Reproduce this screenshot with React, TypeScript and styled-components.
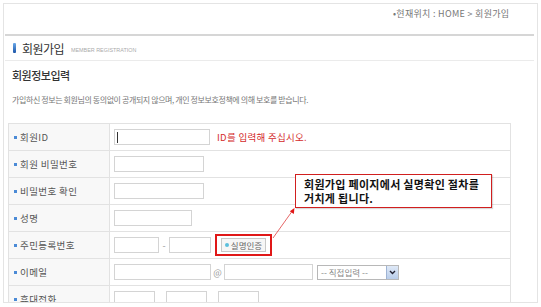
import React from "react";
import styled, { createGlobalStyle } from "styled-components";

const Global = createGlobalStyle`
  html, body { margin: 0; padding: 0; background: #fff; }
  body { font-family: "Noto Sans CJK KR", "Noto Sans", sans-serif; }
  * { box-sizing: border-box; }
`;

const Frame = styled.div`
  position: relative;
  margin: 3px 0 0 3px;
  width: 535px;
  height: 300px;
  border: 1px solid #e4e4e4;
  overflow: hidden;
  background: #fff;
`;

const Breadcrumb = styled.div`
  height: 30px;
  padding: 4px 0 0 389px;
  font-size: 9px;
  line-height: 12px;
  color: #777;
  letter-spacing: 0.3px;
  white-space: nowrap;
`;

const HeavyRule = styled.div`
  margin: 0 3px 0 1px;
  height: 2px;
  background: #d6d6d6;
`;

const LightRule = styled.div`
  margin: 0 3px 0 1px;
  height: 1px;
  background: #ebebeb;
`;

const TitleRow = styled.div`
  height: 24px;
  display: flex;
  align-items: center;
  padding-left: 9px;
  gap: 6px;
`;

const TitleBar = styled.span`
  width: 3px;
  height: 10px;
  border-radius: 1px;
  background: linear-gradient(#6aa8e8, #1c55a8);
`;

const Title = styled.span`
  font-size: 12px;
  color: #333;
  letter-spacing: -0.5px;
`;

const SubTitle = styled.span`
  font-family: "Liberation Sans", sans-serif;
  font-size: 6px;
  color: #aaa;
  margin-left: 1px;
  margin-top: 3px;
  transform: scaleX(0.9);
  transform-origin: left center;
`;

const SectionTitle = styled.div`
  padding: 8px 0 0 8px;
  font-size: 11px;
  line-height: 13px;
  color: #333;
  letter-spacing: -0.5px;
  font-weight: 500;
`;

const Description = styled.div`
  padding: 12px 0 0 8px;
  font-size: 8px;
  line-height: 11px;
  color: #777;
  letter-spacing: -0.4px;
  white-space: nowrap;
`;

const Table = styled.div`
  margin: 18px 0 0 4px;
  width: 503px;
  border-top: 1px solid #e2e2e2;
  border-left: 1px solid #e2e2e2;
  border-right: 1px solid #e2e2e2;
`;

const Row = styled.div`
  display: grid;
  grid-template-columns: 101px 1fr;
  height: 27px;
  border-bottom: 1px solid #e2e2e2;
`;

const Label = styled.div`
  background: #f8f8f8;
  border-right: 1px solid #e2e2e2;
  display: flex;
  align-items: center;
  padding-left: 5px;
  font-size: 9.5px;
  color: #555;
  letter-spacing: 0.4px;
  white-space: nowrap;
  &::before {
    content: "";
    width: 3px;
    height: 3px;
    background: #4a8ad6;
    margin-right: 3px;
  }
`;

const Cell = styled.div<{ $gap?: number }>`
  display: flex;
  align-items: center;
  padding-left: 4px;
  gap: ${(p) => p.$gap ?? 6}px;
`;

const Field = styled.div<{ $w: number }>`
  position: relative;
  width: ${(p) => p.$w}px;
  height: 16px;
  border: 1px solid #d4d4d4;
  background: #fff;
`;

const Caret = styled.span`
  position: absolute;
  left: 2px;
  top: 2px;
  width: 1px;
  height: 11px;
  background: #333;
`;

const Hint = styled.span`
  font-size: 9.5px;
  color: #d42b2b;
  letter-spacing: 0.3px;
  white-space: nowrap;
  margin-left: 1px;
`;

const Sep = styled.span<{ $w: number }>`
  font-size: 9px;
  color: #999;
  width: ${(p) => p.$w}px;
  text-align: center;
`;

const Highlight = styled.div`
  margin-left: 2px;
  width: 57px;
  height: 22px;
  border: 2px solid #e01818;
  display: flex;
  align-items: center;
  justify-content: center;
`;

const SmallButton = styled.div`
  height: 14px;
  padding: 0 3px;
  border: 1px solid #c8c8c8;
  background: #f6f6f6;
  display: flex;
  align-items: center;
  gap: 2px;
  font-size: 8.5px;
  color: #666;
  white-space: nowrap;
  &::before {
    content: "";
    width: 4px;
    height: 4px;
    border-radius: 50%;
    background: #5bbfdc;
  }
`;

const Select = styled.div`
  display: flex;
  align-items: center;
  width: 82px;
  height: 15px;
  border: 1px solid #b8b8b8;
  background: #fff;
  font-size: 8.5px;
  color: #888;
  padding-left: 3px;
  white-space: nowrap;
  margin-left: 4px;
`;

const SelectText = styled.span`
  flex: 1;
`;

const SelectArrow = styled.span`
  width: 12px;
  height: 13px;
  background: linear-gradient(#dfe9f7, #b9cdea);
  border-left: 1px solid #9fb4d4;
  display: flex;
  align-items: center;
  justify-content: center;
`;

const Callout = styled.div`
  position: absolute;
  left: 291px;
  top: 170px;
  width: 197px;
  height: 34px;
  border: 1.5px solid #d11f1f;
  background: #fff;
  padding: 2px 0 0 8px;
  font-size: 11px;
  line-height: 14px;
  font-weight: 700;
  color: #111;
  letter-spacing: 0.3px;
  white-space: nowrap;
  box-shadow: 1px 1px 1px rgba(0,0,0,0.15);
`;

const Arrow = styled.svg`
  position: absolute;
  left: 264px;
  top: 200px;
  overflow: visible;
`;

export default function App() {
  return (
    <>
      <Global />
      <Frame>
        <Breadcrumb>•현재위치 : HOME &gt; 회원가입</Breadcrumb>
        <HeavyRule />
        <TitleRow>
          <TitleBar />
          <Title>회원가입</Title>
          <SubTitle>MEMBER REGISTRATION</SubTitle>
        </TitleRow>
        <LightRule />
        <SectionTitle>회원정보입력</SectionTitle>
        <Description>
          가입하신 정보는 회원님의 동의없이 공개되지 않으며, 개인 정보보호정책에 의해 보호를 받습니다.
        </Description>
        <Table>
          <Row>
            <Label>회원ID</Label>
            <Cell>
              <Field $w={96}>
                <Caret />
              </Field>
              <Hint>ID를 입력해 주십시오.</Hint>
            </Cell>
          </Row>
          <Row>
            <Label>회원 비밀번호</Label>
            <Cell>
              <Field $w={90} />
            </Cell>
          </Row>
          <Row>
            <Label>비밀번호 확인</Label>
            <Cell>
              <Field $w={90} />
            </Cell>
          </Row>
          <Row>
            <Label>성명</Label>
            <Cell>
              <Field $w={78} />
            </Cell>
          </Row>
          <Row>
            <Label>주민등록번호</Label>
            <Cell $gap={2}>
              <Field $w={45} />
              <Sep $w={6}>-</Sep>
              <Field $w={42} />
              <Highlight>
                <SmallButton>실명인증</SmallButton>
              </Highlight>
            </Cell>
          </Row>
          <Row>
            <Label>이메일</Label>
            <Cell $gap={0}>
              <Field $w={97} />
              <Sep $w={13}>@</Sep>
              <Field $w={89} />
              <Select>
                <SelectText>-- 직접입력 --</SelectText>
                <SelectArrow>
                  <svg width="7" height="5" viewBox="0 0 7 5">
                    <path d="M1 1 L3.5 3.5 L6 1" fill="none" stroke="#223" strokeWidth="1.4" />
                  </svg>
                </SelectArrow>
              </Select>
            </Cell>
          </Row>
          <Row>
            <Label>휴대전화</Label>
            <Cell $gap={11}>
              <Field $w={41} />
              <Field $w={41} />
              <Field $w={41} />
            </Cell>
          </Row>
        </Table>
        <Callout>
          회원가입 페이지에서 실명확인 절차를
          <br />
          거치게 됩니다.
        </Callout>
        <Arrow width="30" height="40" viewBox="0 0 30 40">
          <line x1="5" y1="34" x2="25" y2="6" stroke="#e04040" strokeWidth="0.8" />
          <path d="M26.5 4 L25.8 10 L21.8 7.2 Z" fill="#e01818" />
        </Arrow>
      </Frame>
    </>
  );
}
